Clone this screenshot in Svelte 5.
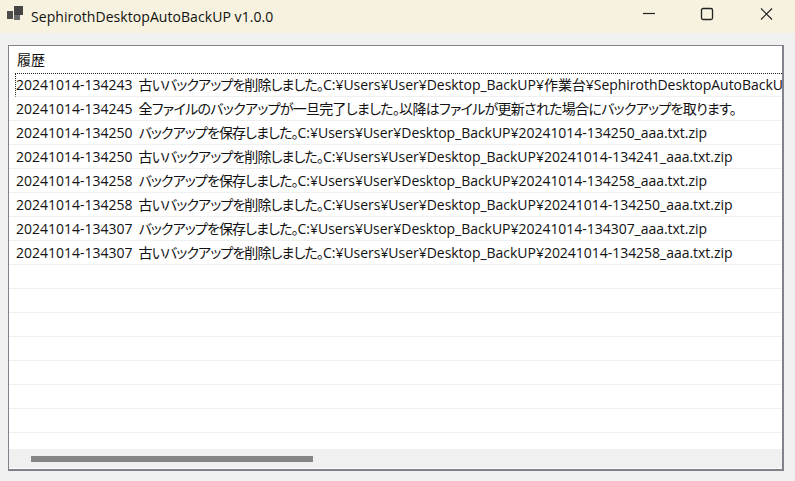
<script>
    const logs = [
        { time: '20241014-134243', msg: '古いバックアップを削除しました。', path: 'C:¥Users¥User¥Desktop_BackUP¥作業台¥SephirothDesktopAutoBackUP¥20241014-134243_aaa.txt.zip' },
        { time: '20241014-134245', msg: '全ファイルのバックアップが一旦完了しました。以降はファイルが更新された場合にバックアップを取ります。', path: '' },
        { time: '20241014-134250', msg: 'バックアップを保存しました。', path: 'C:¥Users¥User¥Desktop_BackUP¥20241014-134250_aaa.txt.zip' },
        { time: '20241014-134250', msg: '古いバックアップを削除しました。', path: 'C:¥Users¥User¥Desktop_BackUP¥20241014-134241_aaa.txt.zip' },
        { time: '20241014-134258', msg: 'バックアップを保存しました。', path: 'C:¥Users¥User¥Desktop_BackUP¥20241014-134258_aaa.txt.zip' },
        { time: '20241014-134258', msg: '古いバックアップを削除しました。', path: 'C:¥Users¥User¥Desktop_BackUP¥20241014-134250_aaa.txt.zip' },
        { time: '20241014-134307', msg: 'バックアップを保存しました。', path: 'C:¥Users¥User¥Desktop_BackUP¥20241014-134307_aaa.txt.zip' },
        { time: '20241014-134307', msg: '古いバックアップを削除しました。', path: 'C:¥Users¥User¥Desktop_BackUP¥20241014-134258_aaa.txt.zip' }
    ];
    const emptyRows = new Array(8).fill(0);
</script>

<div class="window">
    <header class="titlebar">
        <svg class="app-icon" width="31" height="33" viewBox="0 0 31 33">
            <rect x="7" y="11" width="6" height="8" fill="#4d4d4d" />
            <rect x="14" y="6" width="9" height="9" fill="#454545" />
            <rect x="14" y="15" width="6" height="5" fill="#6a6a6a" />
        </svg>
        <span class="title">SephirothDesktopAutoBackUP v1.0.0</span>
        <div class="controls">
            <svg width="58" height="33" viewBox="0 0 58 33">
                <path d="M22 13.5H34" stroke="#222" stroke-width="1.2" fill="none" />
            </svg>
            <svg width="58" height="33" viewBox="0 0 58 33">
                <rect x="22.5" y="8.5" width="11" height="11" rx="1.5" stroke="#222" stroke-width="1.3" fill="none" />
            </svg>
            <svg width="58" height="33" viewBox="0 0 58 33">
                <path d="M24 8.5L35 19.5M35 8.5L24 19.5" stroke="#222" stroke-width="1.2" fill="none" />
            </svg>
        </div>
    </header>

    <main class="content">
        <div class="list">
            <div class="heading">履歴</div>
            <div class="rows">
                {#each logs as log, i}
                    <div class="row" class:focused={i === 0}><span>{log.time}</span><span class="msg" class:long={!log.path}>{log.msg}</span><span class="path">{log.path}</span></div>
                {/each}
                {#each emptyRows as _}
                    <div class="row"></div>
                {/each}
            </div>
            <div class="scrollbar">
                <div class="thumb"></div>
            </div>
        </div>
    </main>
</div>

<style>
    :global(body) {
        background: #f0f0f0;
    }

    .window {
        width: 795px;
        height: 481px;
        display: flex;
        flex-direction: column;
        overflow: hidden;
        font-family: "Open Sans", "Noto Sans CJK JP", sans-serif;
        color: #111;
    }

    .titlebar {
        height: 33px;
        flex: none;
        display: flex;
        align-items: center;
        background: #f7f2df;
    }

    .app-icon {
        flex: none;
    }

    .title {
        font-size: 14px;
        letter-spacing: 0.06px;
    }

    .controls {
        margin-left: auto;
        display: flex;
    }

    .content {
        flex: 1;
        padding: 12px 11px 10px 8px;
        min-height: 0;
        display: flex;
    }

    .list {
        flex: 1;
        min-width: 0;
        display: flex;
        flex-direction: column;
        background: #fff;
        border: 1px solid #82838a;
        border-bottom-width: 2px;
        border-right-width: 2px;
    }

    .heading {
        height: 27px;
        flex: none;
        padding: 3px 0 0 8px;
        box-sizing: border-box;
        font-size: 14px;
    }

    .rows {
        flex: 1;
        overflow: hidden;
    }

    .row {
        height: 24px;
        box-sizing: border-box;
        padding-left: 7px;
        border-bottom: 1px solid #f0f0f0;
        font-size: 14px;
        line-height: 23px;
        white-space: nowrap;
        overflow: hidden;
    }

    .msg {
        margin-left: 6px;
        font-feature-settings: "palt";
        letter-spacing: -0.9px;
    }

    .msg.long {
        letter-spacing: -0.72px;
    }

    .path {
        letter-spacing: -0.03px;
    }

    .focused {
        border-top: 1px dotted #222;
        border-left: 1px dotted #222;
        margin-left: 6px;
        padding-left: 0;
        line-height: 21px;
    }

    .scrollbar {
        height: 19px;
        flex: none;
        box-sizing: border-box;
        background: #f0f0f0;
        display: flex;
        align-items: center;
        padding: 1px 0 0 22px;
        margin-bottom: 1px;
    }

    .thumb {
        width: 282px;
        height: 6px;
        background: #858585;
    }
</style>
